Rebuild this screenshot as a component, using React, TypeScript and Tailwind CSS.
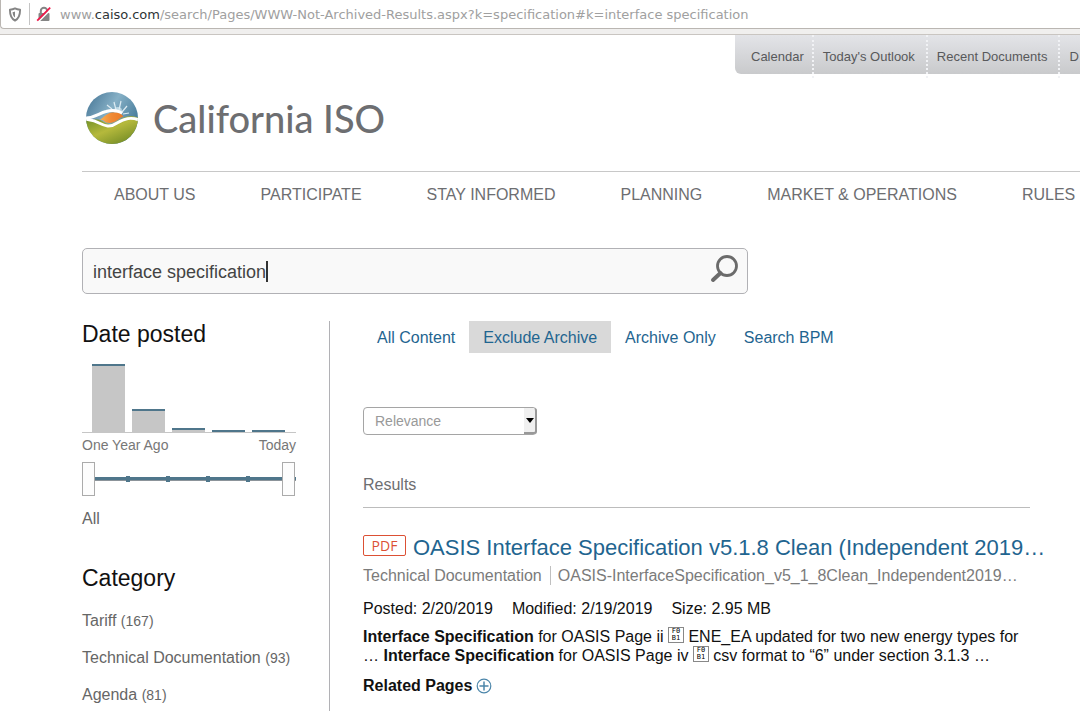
import React from "react";

const utilityLinks = ["Calendar", "Today's Outlook", "Recent Documents", "D"];
const mainLinks = ["ABOUT US", "PARTICIPATE", "STAY INFORMED", "PLANNING", "MARKET & OPERATIONS", "RULES"];
const tabs = ["All Content", "Exclude Archive", "Archive Only", "Search BPM"];
const histogram = [68, 23, 4, 2, 2];
const categories = [
  { name: "Tariff", count: 167 },
  { name: "Technical Documentation", count: 93 },
  { name: "Agenda", count: 81 },
];

function AddressBar() {
  return (
    <div className="h-[35px] border-b border-[#c9c5c1] bg-[#f0efee]">
      <div className="flex h-[29px] items-center overflow-hidden rounded-bl border-b border-l border-[#bab6b2] bg-white pl-[7px]">
        <svg className="h-[15px] w-[14px] shrink-0" viewBox="0 0 14 15" aria-label="Protection">
          <path d="M7 1.4C5.3 2.3 3.6 2.6 1.9 2.7c0 5 .9 8.6 5.1 10.9 4.2-2.3 5.1-5.9 5.1-10.9C10.400 2.600 8.700 2.300 7 1.400z" fill="none" stroke="#858585" strokeWidth="1.900" strokeLinejoin="round" />
          <path d="M7 4.400v6.200C5.200 9.200 4.700 7.400 4.600 5 5.500 4.900 6.200 4.700 7 4.400z" fill="#858585" />
        </svg>
        <span className="ml-[7px] h-[22px] w-px shrink-0 bg-[#c4c4c4]" />
        <svg className="ml-[6px] h-4 w-4 shrink-0" viewBox="0 0 16 16" aria-label="Not secure">
          <rect x="2.500" y="7" width="11" height="8" rx="1" fill="#858585" />
          <path d="M4.800 8V4.900a3.200 3.200 0 0 1 6.400 0V8" fill="none" stroke="#858585" strokeWidth="2" />
          <path d="M2.300 15.800 15.500 2.600" stroke="#fff" strokeWidth="1.500" />
          <path d="M1.200 14.600 14.200 1.600" stroke="#f0184a" strokeWidth="1.800" />
        </svg>
        <span className="ml-2 whitespace-nowrap pt-px font-['DejaVu_Sans',sans-serif] text-[13px] leading-5 text-[#a0a0a0]">
          www.<span className="text-[#2e3436]">caiso.com</span>/search/Pages/WWW-Not-Archived-Results.aspx?k=specification#k=interface specification
        </span>
      </div>
    </div>
  );
}

function Logo() {
  return (
    <a href="#home" className="flex h-[60px] items-center gap-[14px] pl-[3px]">
      <svg className="h-[54px] w-[54px]" viewBox="0 0 54 54" aria-hidden="true">
        <defs>
          <linearGradient id="sky" x1="0" y1="0" x2="1" y2="0.6">
            <stop offset="0" stopColor="#3f6f90" />
            <stop offset="0.5" stopColor="#86b0c6" />
            <stop offset="1" stopColor="#3f7595" />
          </linearGradient>
          <linearGradient id="land" x1="0.1" y1="0" x2="0.9" y2="1">
            <stop offset="0" stopColor="#6f8f26" />
            <stop offset="0.45" stopColor="#b5b93c" />
            <stop offset="1" stopColor="#678321" />
          </linearGradient>
          <linearGradient id="sun" x1="0" y1="0" x2="1" y2="0">
            <stop offset="0" stopColor="#fbb254" />
            <stop offset="0.5" stopColor="#f08a35" />
            <stop offset="1" stopColor="#ea7a26" />
          </linearGradient>
          <clipPath id="globe"><circle cx="27" cy="27" r="26" /></clipPath>
        </defs>
        <g clipPath="url(#globe)">
          <rect width="54" height="54" fill="url(#sky)" />
          <path d="M0 28C8 30 12 27 17 30c6 4 10 4 15 0 8-5 14-6 22-3v27H0z" fill="url(#land)" />
          <path d="M31 19l-2-8M27 18l-5-4M34 19l2-9M37 21l5-6M38 23l6-1" stroke="#dcebf2" strokeWidth="1.200" />
          <circle cx="33" cy="20" r="4" fill="#d9edf3" opacity="0.700" />
          <path d="M0 27C10 27 14 22 21 20.500c6-1.500 12-1 16 2" fill="none" stroke="#fff" strokeWidth="3" />
          <path d="M0 28c6 1 9 1 14 4 6 3 11 5 18 0 8-5 14-6 22-3" fill="none" stroke="#fff" strokeWidth="3" />
          <path d="M14 28.500c5-1 6-6 13-7 6-.5 9 1 11.500 4-5 2-8 6.500-14 6.500-3 0-4.500-1-5.500-2-1-1-3-1.500-5-1.500z" fill="url(#sun)" />
        </g>
      </svg>
      <span className="whitespace-nowrap font-['Lato',sans-serif] text-[38px] font-medium leading-[52px] text-[#6d6e71]">California ISO</span>
    </a>
  );
}

function Header() {
  return (
    <header>
      <div className="flex overflow-hidden pl-[735px]">
        <nav aria-label="Utility" className="flex h-[43px] min-w-0 flex-1">
          <ul className="flex h-[39px] w-full rounded-bl-md bg-linear-to-b from-[#e3e4e8] to-[#c9cacc] pl-[7px] text-[13px] leading-[43px] text-[#58595b]">
            {utilityLinks.map((label, i) => (
              <li key={label} className={i === 0 ? "h-[43px] pl-[9px] pr-2" : "h-[43px] border-l-2 border-dotted border-[#f1f2f5] pl-[9px] pr-[11px]"}>
                <a href="#utility" className="whitespace-nowrap">{label}</a>
              </li>
            ))}
          </ul>
        </nav>
      </div>
      <div className="pt-[10px] pl-[82px]">
        <Logo />
        <nav aria-label="Main" className="mt-[23px] overflow-hidden border-t border-[#c8c8c8] pl-8">
          <ul className="flex gap-[65px] pt-3 leading-[22px] text-[#6d6e71]">
            {mainLinks.map((label) => (
              <li key={label}><a href="#main" className="whitespace-nowrap">{label}</a></li>
            ))}
          </ul>
        </nav>
      </div>
    </header>
  );
}

function SearchBox() {
  return (
    <form className="relative flex h-[46px] max-w-[666px] items-center rounded-[5px] border border-[#b1b1b5] bg-[#f9f9f9] pl-[10px] pr-2" onSubmit={(e) => e.preventDefault()}>
      <input aria-label="Search" defaultValue="interface specification" className="min-w-0 flex-1 bg-transparent pt-0.5 text-[18px] leading-6 text-[#444] outline-none" />
      <span className="absolute left-[183px] top-3 h-[21px] w-[2px] bg-[#333]" />
      <button type="submit" aria-label="Submit search" className="-mt-1 h-[30px] w-[30px]">
        <svg viewBox="0 0 30 30" fill="none" stroke="#6b6b6b" strokeLinecap="round">
          <circle cx="18" cy="12" r="9.500" strokeWidth="2.800" />
          <path d="M11.500 19 4 26" strokeWidth="4" />
        </svg>
      </button>
    </form>
  );
}

const rangeClass =
  "pointer-events-none absolute left-0 top-0 h-[34px] w-[213px] appearance-none bg-transparent [&::-webkit-slider-thumb]:pointer-events-auto [&::-webkit-slider-thumb]:h-[34px] [&::-webkit-slider-thumb]:w-[13px] [&::-webkit-slider-thumb]:appearance-none [&::-webkit-slider-thumb]:border [&::-webkit-slider-thumb]:border-[#ababab] [&::-webkit-slider-thumb]:bg-[#fdfdfd]";

function DateFilter() {
  return (
    <section className="w-[214px]">
      <h2 className="text-[23px] leading-[26px] text-[#111]">Date posted</h2>
      <div className="mt-[17px] flex h-[69px] items-end gap-[7px] border-b border-[#c6c6c6] pl-[10px]">
        {histogram.map((height, i) => (
          <div key={i} className="w-[33px] border-t-2 border-[#4f768b] bg-[#c6c6c6]" style={{ height }} />
        ))}
      </div>
      <div className="mt-[2px] flex justify-between text-[14px] leading-5 text-[#777]">
        <span>One Year Ago</span>
        <span>Today</span>
      </div>
      <div className="relative mt-[7px] flex h-[34px] items-center">
        <div className="flex h-[4px] w-full items-center border-b border-[#8c949a] bg-[#4f768b] pl-11">
          {[0, 1, 2, 3].map((tick) => (
            <span key={tick} className="mr-9 h-[6px] w-1 shrink-0 bg-[#4f768b]" />
          ))}
        </div>
        <input type="range" aria-label="Earliest date" min="0" max="5" defaultValue="0" className={rangeClass} />
        <input type="range" aria-label="Latest date" min="0" max="5" defaultValue="5" className={rangeClass} />
      </div>
      <p className="mt-[13px] leading-5 text-[#666]">All</p>
    </section>
  );
}

function Sidebar() {
  return (
    <aside className="w-[248px] shrink-0 border-r border-[#b1b1b5]">
      <DateFilter />
      <section className="mt-9">
        <h2 className="text-[23px] leading-[26px] text-[#111]">Category</h2>
        <ul className="mt-5 flex flex-col gap-[17px] text-[#666]">
          {categories.map((c) => (
            <li key={c.name} className="leading-5">
              <a href="#category" className="whitespace-nowrap">{c.name} <span className="text-[14px]">({c.count})</span></a>
            </li>
          ))}
        </ul>
      </section>
    </aside>
  );
}

function MissingGlyph() {
  return (
    <span className="inline-flex h-4 w-4 flex-col items-center justify-center border border-[#888] align-top font-['DejaVu_Sans_Mono',monospace] text-[7px] leading-[7px] text-black">
      <span>F0</span>
      <span>B1</span>
    </span>
  );
}

function Result() {
  return (
    <article className="pt-[26px] text-[#111]">
      <h3 className="flex items-start gap-[7px] text-[22px] leading-[28px]">
        <span className="mt-px flex h-[21px] w-[43px] shrink-0 items-center justify-center rounded-[2px] border border-[#dc5034] font-['Open_Sans',sans-serif] text-[14px] leading-5 text-[#dc5034]">PDF</span>
        <a href="#result" className="whitespace-nowrap text-[#1f6590]">OASIS Interface Specification v5.1.8 Clean (Independent 2019…</a>
      </h3>
      <p className="mt-1 flex leading-[19px] text-[#7b7b7b]">
        <span className="border-r border-[#c0c0c0] pr-2">Technical Documentation</span>
        <span className="pl-[7px]">OASIS-InterfaceSpecification_v5_1_8Clean_Independent2019…</span>
      </p>
      <p className="mt-[14px] flex gap-[19px] leading-5">
        <span>Posted: 2/20/2019</span>
        <span>Modified: 2/19/2019</span>
        <span>Size: 2.95 MB</span>
      </p>
      <p className="mt-2 leading-[19px]">
        <b>Interface Specification</b> for OASIS Page ii <MissingGlyph /> ENE_EA updated for two new energy types for … <b>Interface Specification</b> for OASIS Page iv <MissingGlyph /> csv format to “6” under section 3.1.3 …
      </p>
      <button type="button" className="mt-[11px] flex items-center gap-1 font-bold leading-5">
        Related Pages
        <svg className="h-4 w-4" viewBox="0 0 16 16" fill="none" stroke="#4c86aa" aria-hidden="true">
          <circle cx="8" cy="8" r="6.800" strokeWidth="1.200" />
          <path d="M8 3.500v9M3.500 8h9" strokeWidth="1.500" />
        </svg>
      </button>
    </article>
  );
}

function Results() {
  return (
    <main className="ml-[33px] w-full max-w-[667px]">
      <div className="flex">
        {tabs.map((tab) => (
          <a key={tab} href="#tab" className={tab === "Exclude Archive" ? "h-8 bg-[#d9d9d9] px-[14px] leading-[34px] text-[#1f6590]" : "h-8 px-[14px] leading-[34px] text-[#1f6590]"}>{tab}</a>
        ))}
      </div>
      <div className="relative mt-[54px] w-[174px]">
        <select aria-label="Sort by" className="block h-7 w-full appearance-none rounded border border-[#a5a5a5] bg-white pl-[11px] text-[14px] leading-5 text-[#999] outline-none">
          <option>Relevance</option>
        </select>
        <span className="pointer-events-none absolute right-0 top-px flex h-[26px] w-[13px] items-center justify-center rounded-r-[3px] border-b-2 border-r-2 border-[#999] bg-[#f0f0f0]">
          <svg className="h-[5px] w-[8px]" viewBox="0 0 8 5"><path d="M0 0h8L4 5z" fill="#000" /></svg>
        </span>
      </div>
      <h2 className="mt-10 border-b border-[#bcbcbc] pb-3 leading-5 text-[#6d6e71]">Results</h2>
      <Result />
    </main>
  );
}

export default function App() {
  return (
    <div className="flex min-h-screen flex-col overflow-x-hidden bg-white font-['Liberation_Sans',Arial,sans-serif] text-[16px]">
      <AddressBar />
      <Header />
      <div className="flex flex-1 flex-col pl-[82px] pt-[42px]">
        <SearchBox />
        <div className="mt-[27px] flex flex-1">
          <Sidebar />
          <Results />
        </div>
      </div>
    </div>
  );
}
